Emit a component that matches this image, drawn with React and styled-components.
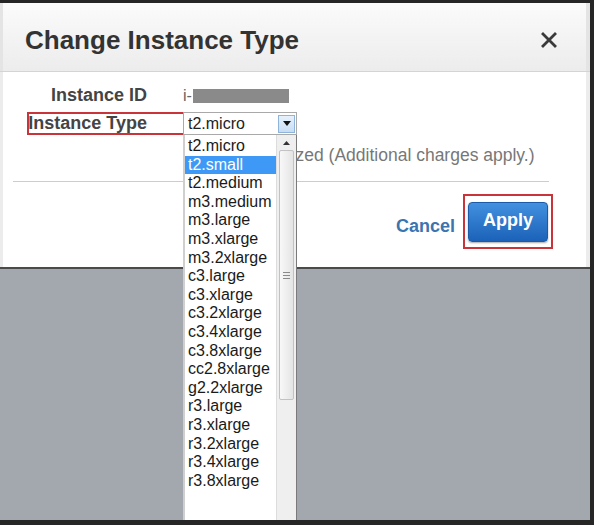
import styled, { createGlobalStyle } from "styled-components";

const GlobalStyle = createGlobalStyle`
  html, body {
    margin: 0;
    padding: 0;
    background: #262626;
    font-family: "Liberation Sans", Arial, sans-serif;
  }
`;

const instanceTypes = [
  "t2.micro",
  "t2.small",
  "t2.medium",
  "m3.medium",
  "m3.large",
  "m3.xlarge",
  "m3.2xlarge",
  "c3.large",
  "c3.xlarge",
  "c3.2xlarge",
  "c3.4xlarge",
  "c3.8xlarge",
  "cc2.8xlarge",
  "g2.2xlarge",
  "r3.large",
  "r3.xlarge",
  "r3.2xlarge",
  "r3.4xlarge",
  "r3.8xlarge",
];

function App() {
  const selected = "t2.small";

  return (
    <Frame>
      <GlobalStyle />
      <Screen>
        <Dialog>
          <Header>
            <Title>Change Instance Type</Title>
            <CloseButton aria-label="Close">
              <svg width="16" height="16" viewBox="0 0 16 16">
                <path
                  d="M2 2 L14 14 M14 2 L2 14"
                  stroke="#3a3a3a"
                  strokeWidth="2.8"
                  strokeLinecap="square"
                />
              </svg>
            </CloseButton>
          </Header>

          <Body>
            <FieldRow>
              <Label>Instance ID</Label>
              <IdValue>
                i-<Redacted />
              </IdValue>
            </FieldRow>

            <FieldRow $marked>
              <Label>Instance Type</Label>
              <Select>
                <SelectText>t2.micro</SelectText>
                <SelectArrow>
                  <svg width="8" height="5" viewBox="0 0 8 5">
                    <path d="M0 0 H8 L4 5 Z" fill="#111" />
                  </svg>
                </SelectArrow>

                <DropList>
                  <Options>
                    {instanceTypes.map((type) => (
                      <Option key={type} $active={type === selected}>
                        {type}
                      </Option>
                    ))}
                  </Options>
                  <Scrollbar>
                    <ScrollUp>
                      <svg width="7" height="4" viewBox="0 0 7 4">
                        <path d="M0 4 L3.5 0 L7 4 Z" fill="#333" />
                      </svg>
                    </ScrollUp>
                    <Thumb>
                      <Grip />
                      <Grip />
                      <Grip />
                    </Thumb>
                  </Scrollbar>
                </DropList>
              </Select>
            </FieldRow>

            <CheckRow>
              <Checkbox type="checkbox" />
              <CheckText>EBS-optimized (Additional charges apply.)</CheckText>
            </CheckRow>

            <Divider />

            <Footer>
              <CancelLink>Cancel</CancelLink>
              <Marker>
                <ApplyButton>Apply</ApplyButton>
              </Marker>
            </Footer>
          </Body>
        </Dialog>
        <Backdrop />
      </Screen>
    </Frame>
  );
}

const Frame = styled.div`
  width: 594px;
  height: 525px;
  box-sizing: border-box;
  padding: 3px 4px 5px 0;
  background: #262626;
`;

const Screen = styled.div`
  position: relative;
  height: 100%;
  overflow: hidden;
  display: flex;
  flex-direction: column;
  background: #a3a7ae;
`;

const Dialog = styled.div`
  background: #fff;
  border-bottom: 2px solid #4a4a4a;
`;

const Header = styled.div`
  height: 69px;
  box-sizing: border-box;
  padding: 5px 33px 0 25px;
  display: flex;
  align-items: center;
  justify-content: space-between;
  background: linear-gradient(#fbfbfb, #ececec);
  border-bottom: 1px solid #d4d4d4;
  box-shadow: inset 3px 0 0 #e4e4e4, inset -4px 0 0 #e4e4e4;
`;

const Title = styled.h1`
  margin: 0;
  font-size: 26px;
  line-height: 30px;
  font-weight: bold;
  color: #333;
`;

const CloseButton = styled.button`
  border: 0;
  padding: 0;
  background: none;
  display: flex;
  cursor: pointer;
`;

const Body = styled.div`
  height: 195px;
  box-sizing: border-box;
  padding-top: 12px;
  display: flex;
  flex-direction: column;
  box-shadow: inset 3px 0 0 #ececec, inset -4px 0 0 #ececec;
`;

const FieldRow = styled.div`
  width: 270px;
  height: 23px;
  margin-left: 27px;
  margin-bottom: 5px;
  display: flex;
  align-items: center;
  gap: 36px;
  outline: ${(p) => (p.$marked ? "2px solid #c9343b" : "none")};
  outline-offset: -2px;
`;

const Label = styled.div`
  width: 120px;
  flex-shrink: 0;
  text-align: right;
  font-size: 18px;
  font-weight: bold;
  color: #444;
  white-space: nowrap;
`;

const IdValue = styled.div`
  display: flex;
  align-items: center;
  font-size: 16px;
  color: #666;
`;

const Redacted = styled.span`
  width: 96px;
  height: 14px;
  margin-left: 1px;
  background: #8a8a8a;
`;

const Select = styled.div`
  position: relative;
  width: 114px;
  height: 23px;
  box-sizing: border-box;
  border: 1px solid #a9a9a9;
  display: flex;
  align-items: center;
  background: #fff;
`;

const SelectText = styled.span`
  flex: 1;
  padding-left: 4px;
  font-size: 16px;
  color: #222;
`;

const SelectArrow = styled.span`
  width: 17px;
  height: 18px;
  margin-right: 1px;
  box-sizing: border-box;
  border: 1px solid #8fb4da;
  background: linear-gradient(#e6f1fc, #c8ddf2);
  display: flex;
  align-items: center;
  justify-content: center;
`;

const DropList = styled.div`
  position: absolute;
  top: calc(100% + 1px);
  left: -1px;
  width: 114px;
  height: 400px;
  box-sizing: border-box;
  display: flex;
  background: #fff;
  border-left: 2px solid #cfcfcf;
  border-right: 1px solid #7a7a7a;
  z-index: 5;
`;

const Options = styled.div`
  flex: 1;
  padding-top: 2px;
`;

const Option = styled.div`
  height: 18.6px;
  line-height: 18.6px;
  padding-left: 3px;
  font-size: 16px;
  color: ${(p) => (p.$active ? "#fff" : "#1a1a1a")};
  background: ${(p) => (p.$active ? "#3d99f5" : "transparent")};
  white-space: nowrap;
`;

const Scrollbar = styled.div`
  width: 19px;
  display: flex;
  flex-direction: column;
  align-items: center;
  background: #efefef;
  border-left: 1px solid #dcdcdc;
`;

const ScrollUp = styled.div`
  height: 15px;
  display: flex;
  align-items: center;
  justify-content: center;
`;

const Thumb = styled.div`
  width: 15px;
  height: 250px;
  box-sizing: border-box;
  border: 1px solid #c2c2c2;
  border-radius: 2px;
  background: linear-gradient(90deg, #f8f8f8, #e4e4e4);
  display: flex;
  flex-direction: column;
  align-items: center;
  justify-content: center;
  gap: 2px;
`;

const Grip = styled.span`
  width: 7px;
  height: 1px;
  background: #8a8a8a;
`;

const CheckRow = styled.div`
  height: 20px;
  margin: 5px 0 0 186px;
  display: flex;
  align-items: center;
  gap: 9px;
`;

const Checkbox = styled.input`
  width: 13px;
  height: 13px;
  margin: 0;
`;

const CheckText = styled.span`
  font-size: 17.5px;
  color: #777;
  white-space: nowrap;
`;

const Divider = styled.div`
  height: 1px;
  margin: 16px 41px 0 13px;
  background: #cdcdcd;
`;

const Footer = styled.div`
  margin-top: 12px;
  padding-right: 37px;
  display: flex;
  justify-content: flex-end;
  align-items: center;
  gap: 8px;
`;

const CancelLink = styled.button`
  border: 0;
  padding: 9px 0 0;
  background: none;
  font-family: inherit;
  font-size: 18px;
  font-weight: bold;
  color: #3c74b0;
  cursor: pointer;
`;

const Marker = styled.div`
  padding: 6px 3px 5px;
  border: 2px solid #c9343b;
  display: flex;
`;

const ApplyButton = styled.button`
  width: 80px;
  height: 40px;
  padding: 0 0 4px;
  border: 1px solid #1a5aa8;
  border-radius: 4px;
  background: linear-gradient(#4290df, #1b62b8);
  box-shadow: 0 1px 2px rgba(0, 0, 0, 0.35);
  font-family: inherit;
  font-size: 18px;
  font-weight: bold;
  color: #fff;
  cursor: pointer;
`;

const Backdrop = styled.div`
  flex: 1;
  background: #a3a7ae;
`;

export default App;
